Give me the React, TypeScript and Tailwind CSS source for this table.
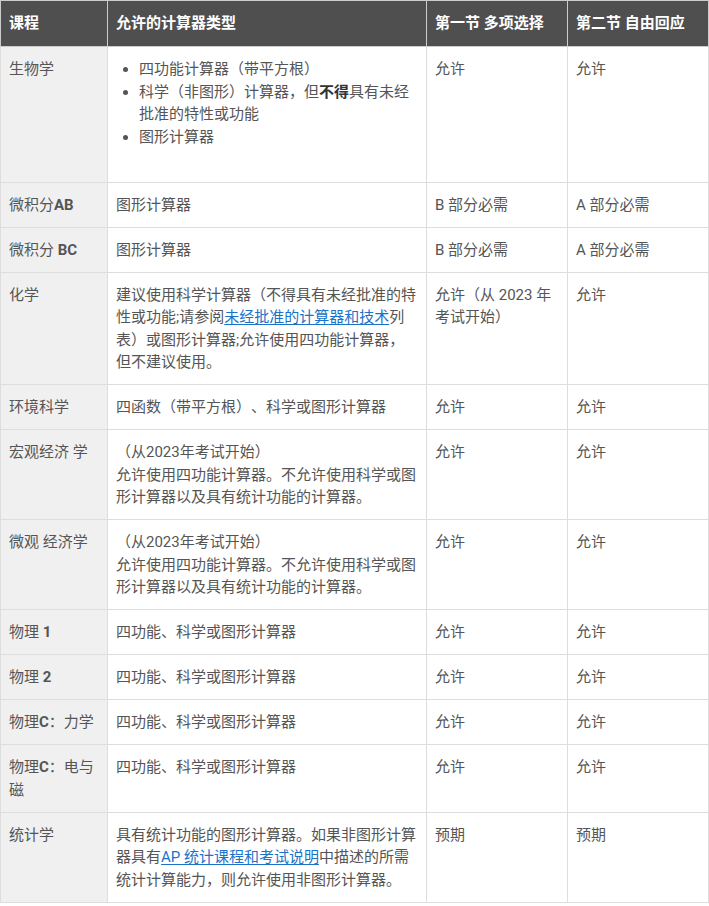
import React from 'react';

type Row = {
  course: React.ReactNode;
  types: React.ReactNode;
  mc: React.ReactNode;
  fr: React.ReactNode;
};

const Link = ({ children }: { children: React.ReactNode }) => (
  <a href="#" className="text-[#1a73c8] underline underline-offset-2">
    {children}
  </a>
);

const rows: Row[] = [
  {
    course: '生物学',
    types: (
      <ul className="list-disc pl-[23px] mb-[23px]">
        <li>四功能计算器（带平方根）</li>
        <li>
          科学（非图形）计算器，但<b className="font-bold text-[#333]">不得</b>具有未经批准的特性或功能
        </li>
        <li>图形计算器</li>
      </ul>
    ),
    mc: '允许',
    fr: '允许',
  },
  {
    course: (
      <>
        微积分<b className="font-bold">AB</b>
      </>
    ),
    types: '图形计算器',
    mc: 'B 部分必需',
    fr: 'A 部分必需',
  },
  {
    course: (
      <>
        微积分 <b className="font-bold">BC</b>
      </>
    ),
    types: '图形计算器',
    mc: 'B 部分必需',
    fr: 'A 部分必需',
  },
  {
    course: '化学',
    types: (
      <>
        建议使用科学计算器（不得具有未经批准的特性或功能;请参阅<Link>未经批准的计算器和技术</Link>列表）或图形计算器;允许使用四功能计算器，但不建议使用。
      </>
    ),
    mc: '允许（从 2023 年考试开始）',
    fr: '允许',
  },
  {
    course: '环境科学',
    types: '四函数（带平方根）、科学或图形计算器',
    mc: '允许',
    fr: '允许',
  },
  {
    course: '宏观经济 学',
    types: (
      <>
        （从2023年考试开始）
        <br />
        允许使用四功能计算器。不允许使用科学或图形计算器以及具有统计功能的计算器。
      </>
    ),
    mc: '允许',
    fr: '允许',
  },
  {
    course: '微观 经济学',
    types: (
      <>
        （从2023年考试开始）
        <br />
        允许使用四功能计算器。不允许使用科学或图形计算器以及具有统计功能的计算器。
      </>
    ),
    mc: '允许',
    fr: '允许',
  },
  {
    course: (
      <>
        物理 <b className="font-bold">1</b>
      </>
    ),
    types: '四功能、科学或图形计算器',
    mc: '允许',
    fr: '允许',
  },
  {
    course: (
      <>
        物理 <b className="font-bold">2</b>
      </>
    ),
    types: '四功能、科学或图形计算器',
    mc: '允许',
    fr: '允许',
  },
  {
    course: (
      <>
        物理<b className="font-bold">C</b>：力学
      </>
    ),
    types: '四功能、科学或图形计算器',
    mc: '允许',
    fr: '允许',
  },
  {
    course: (
      <>
        物理<b className="font-bold">C</b>：电与磁
      </>
    ),
    types: '四功能、科学或图形计算器',
    mc: '允许',
    fr: '允许',
  },
  {
    course: '统计学',
    types: (
      <>
        具有统计功能的图形计算器。如果非图形计算器具有<Link>AP 统计课程和考试说明</Link>中描述的所需统计计算能力，则允许使用非图形计算器。
      </>
    ),
    mc: '预期',
    fr: '预期',
  },
];

function App() {
  const cell = 'border border-[#dddddd] px-2 pt-[11px] pb-[10.5px] align-top text-left';
  const head = 'border border-[#cccccc] px-2 h-[46px] align-middle text-left font-bold text-white';

  return (
    <div
      className="bg-white w-[709px] text-[15px] leading-[22.5px] text-[#555555] [text-spacing-trim:space-all]"
      style={{ fontFamily: 'Roboto, "Noto Sans CJK SC", sans-serif' }}
    >
      <table className="table-fixed border-collapse w-[708px]">
        <colgroup>
          <col className="w-[107px]" />
          <col className="w-[319px]" />
          <col className="w-[141px]" />
          <col className="w-[141px]" />
        </colgroup>
        <thead>
          <tr className="bg-[#4f4f4f]">
            <th className={head}>课程</th>
            <th className={head}>允许的计算器类型</th>
            <th className={head}>第一节 多项选择</th>
            <th className={head}>第二节 自由回应</th>
          </tr>
        </thead>
        <tbody>
          {rows.map((r, i) => (
            <tr key={i}>
              <td className={`${cell} bg-[#f0f0f0]`}>{r.course}</td>
              <td className={cell}>{r.types}</td>
              <td className={cell}>{r.mc}</td>
              <td className={cell}>{r.fr}</td>
            </tr>
          ))}
        </tbody>
      </table>
    </div>
  );
}

export default App;
